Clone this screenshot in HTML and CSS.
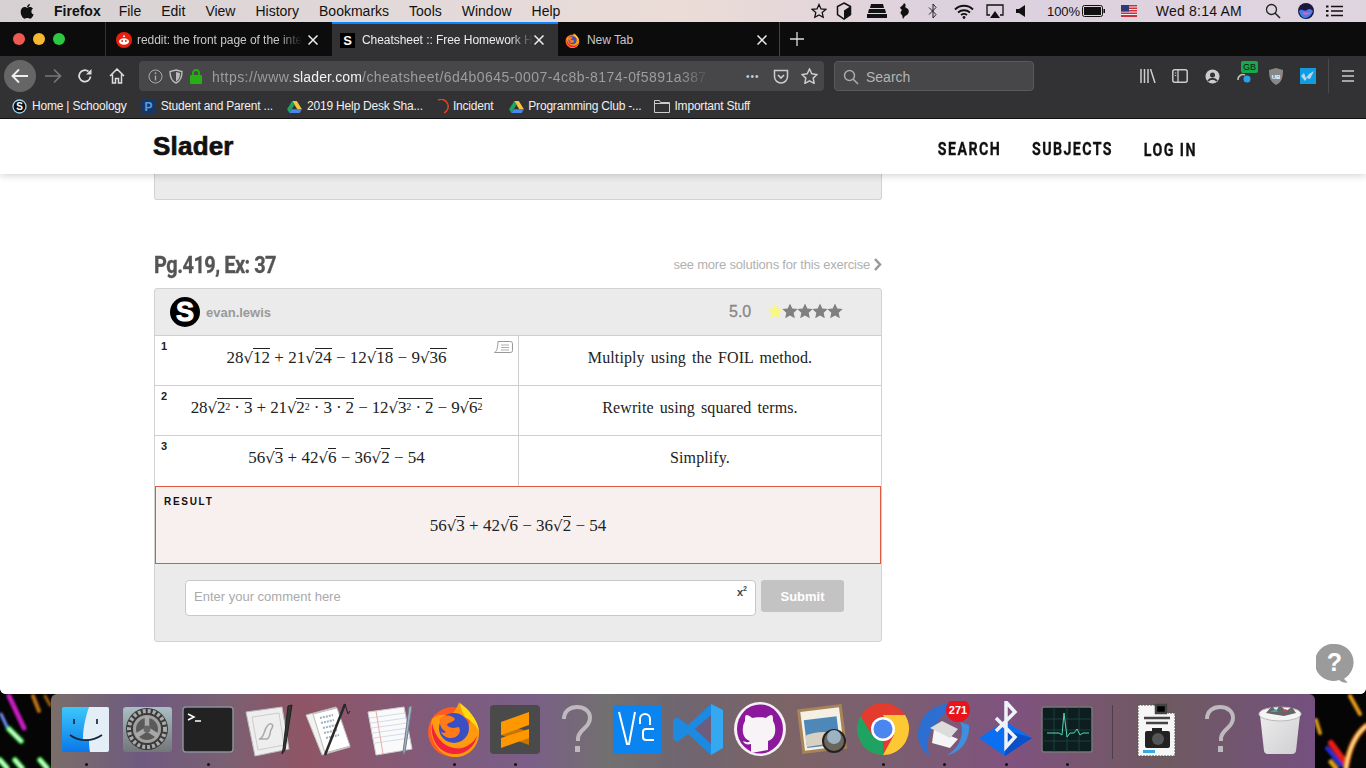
FILE: index.html
```html
<!DOCTYPE html>
<html lang="en">
<head>
<meta charset="utf-8">
<title>Cheatsheet :: Free Homework Help</title>
<link rel="stylesheet" href="styles.css">
</head>
<body>
<svg width="0" height="0" class="defs">
  <defs>
    <symbol id="ff" viewBox="0 0 56 56">
      <circle cx="27" cy="31" r="25" fill="#ff5a1f"/>
      <path d="M6 18C2 32 8 54 28 56c15 1 26-12 25-26-1-8-5-14-11-19 3 7 2 12 0 15C39 16 37 8 33 1c-3 8-5 11-11 14-6-2-10-2-16 3z" fill="#ff9a0e"/>
      <path d="M34 2c8 6 17 15 19 28-4-7-9-11-14-14-2-5-5-9-5-14z" fill="#ffdb12"/>
      <circle cx="28" cy="27" r="15" fill="#3b4fc4"/>
      <path d="M14 18c5-5 12-4 15 0-2 4-7 3-8 6 3 4 8 3 12 2 3 6-2 11-8 11-4 0-8-2-10-6 2 1 4 1 5 0-5-3-7-8-6-13z" fill="#ff7a18"/>
      <path d="M6 22c-2 14 5 30 22 31 12 1 21-8 23-18-5 9-14 14-23 12C17 45 9 36 6 22z" fill="#f2233d"/>
    </symbol>
    <symbol id="drive" viewBox="0 0 16 14">
      <path d="M5.500 1h5L16 10h-5z" fill="#f6c33b"/>
      <path d="M5.500 1 0 10l2.500 4L8 5z" fill="#1ea362"/>
      <path d="M2.500 14h11L16 10H5z" fill="#4a86f0"/>
    </symbol>
    <symbol id="qmark" viewBox="0 0 56 56">
      <path d="M16 18c0-8 6-12 13-12s13 4 13 11c0 10-11 11-12 20v3" fill="none" stroke="currentColor" stroke-width="4"/>
      <rect x="27" y="45" width="5" height="6" fill="currentColor"/>
    </symbol>
    <symbol id="starshape" viewBox="0 0 16 16">
      <path d="M8 .5l2.300 5 5.400.6-4 3.700 1.100 5.400L8 12.500l-4.800 2.700 1.100-5.400-4-3.700 5.400-.6z" fill="currentColor"/>
    </symbol>
    <filter id="soft" x="-30%" y="-30%" width="160%" height="160%"><feGaussianBlur stdDeviation="1"/></filter>
  </defs>
</svg>

<svg class="wallpaper" viewBox="0 0 1366 768" aria-hidden="true">
  <g fill="none" stroke-linecap="round" filter="url(#soft)">
    <path d="M9 696l15 32" stroke="#c81cc0" stroke-width="5"/>
    <path d="M33 696l6 15" stroke="#c07018" stroke-width="4"/>
    <path d="M45 696l5 9" stroke="#a06010" stroke-width="3"/>
    <path d="M1 714l7 15" stroke="#7090ff" stroke-width="3"/>
    <path d="M9 729l12 12" stroke="#30e040" stroke-width="6"/>
    <path d="M9 729l12 12" stroke="#f0fff0" stroke-width="2"/>
    <path d="M0 760l7 8M15 760l7 8M40 760l7 8" stroke="#30e040" stroke-width="6"/>
    <path d="M0 760l7 8M15 760l7 8M40 760l7 8" stroke="#f0fff0" stroke-width="2"/>
    <path d="M1350 696l10 18" stroke="#e89a18" stroke-width="4"/>
    <path d="M1316 720l4 13" stroke="#d89a18" stroke-width="4"/>
    <path d="M1331 743l14 19" stroke="#e81c18" stroke-width="6"/>
    <path d="M1327 748l14 17" stroke="#2030e0" stroke-width="4"/>
    <path d="M1331 762l5 6" stroke="#d8a018" stroke-width="5"/>
    <path d="M1346 768c3-20 10-34 20-42" stroke="#e87a10" stroke-width="6"/>
    <path d="M1346 768c3-20 10-34 20-42" stroke="#fff0a0" stroke-width="2"/>
  </g>
</svg>

<div class="desktop">
  <header class="menubar">
    <div class="menu-left">
      <svg class="apple" viewBox="0 0 14 16"><path d="M10 1c0 2-1.700 3.200-3 3.100C7 2.400 8.500 1.100 10 1zM7 4.800c.8 0 1.600-.7 3-.7 1.200 0 2.300.6 3 1.600-2.400 1.400-2 4.800.6 5.800-.7 1.800-2 4.200-3.500 4.200-1 0-1.400-.6-2.700-.6s-1.800.6-2.700.6C3 15.700.7 12.200.7 9c0-3 2-4.900 3.900-4.900 1.200 0 1.900.7 2.400.7z" fill="#111"/></svg>
      <b class="m-firefox">Firefox</b>
      <span class="m-item">File</span><span class="m-item">Edit</span><span class="m-item">View</span><span class="m-item">History</span><span class="m-item">Bookmarks</span><span class="m-item">Tools</span><span class="m-item">Window</span><span class="m-item">Help</span>
    </div>
    <div class="menu-right">
      <svg class="st" width="16" height="16" viewBox="0 0 16 16"><path d="M8 1.500l2 4.400 4.800.5-3.600 3.200 1 4.700L8 11.900l-4.200 2.400 1-4.700L1.200 6.400 6 5.900z" fill="none" stroke="#111" stroke-width="1.300"/></svg>
      <svg class="st" width="16" height="18" viewBox="0 0 16 18"><path d="M8 1l6.500 3.500v8L8 17l-6.500-4.500v-8z" fill="none" stroke="#111" stroke-width="1.500"/><path d="M8 8.500l6-4v8L8 17z" fill="#111"/></svg>
      <svg class="st" width="22" height="14" viewBox="0 0 22 14"><path d="M5 0h12l1 4H4zM3 5h16l1 4H2zM1 10h20v4H1z" fill="#111"/></svg>
      <svg class="st" width="12" height="16" viewBox="0 0 12 16"><path d="M6 0c2 1 2 3 1 4l3 2c2 3 0 6-3 7l-2 3-1-4c-2-1-2-3 0-5L2 5c1-2 3-2 4-5z" fill="#111"/></svg>
      <svg class="st" width="10" height="16" viewBox="0 0 10 16"><path d="M1 4.500l7 7L5 15V1l3 3.500-7 7" fill="none" stroke="#222" stroke-width="1"/></svg>
      <svg class="st" width="20" height="15" viewBox="0 0 20 15"><path d="M1 5.500c5-5 13-5 18 0M4 8.500c3.500-3 8.500-3 12 0M7 11c2-1.500 4-1.500 6 0" fill="none" stroke="#111" stroke-width="1.800"/><circle cx="10" cy="13.500" r="1.400" fill="#111"/></svg>
      <svg class="st" width="18" height="15" viewBox="0 0 18 15"><path d="M4 11H1V1h16v10h-3" fill="none" stroke="#111" stroke-width="1.300"/><path d="M9 7l5 7H4z" fill="#111"/></svg>
      <svg class="st" width="10" height="12" viewBox="0 0 10 12"><path d="M0 4h3l6-4v12L3 8H0z" fill="#111"/></svg>
      <span class="m-pct">100%</span>
      <svg class="st" width="24" height="12" viewBox="0 0 24 12"><rect x=".5" y=".5" width="20" height="11" rx="2" fill="none" stroke="#111"/><rect x="2" y="2" width="17" height="8" fill="#111"/><rect x="21.500" y="4" width="1.500" height="4" fill="#111"/></svg>
      <svg class="st flag" width="16" height="12" viewBox="0 0 16 12"><rect width="16" height="12" fill="#c9303a"/><path d="M0 2h16M0 4.500h16M0 7h16M0 9.500h16" stroke="#eee" stroke-width="1.200"/><rect width="8" height="6.500" fill="#2f3a78"/></svg>
      <span class="m-clock">Wed 8:14 AM</span>
      <svg class="st" width="16" height="16" viewBox="0 0 16 16"><circle cx="6.500" cy="6.500" r="5" fill="none" stroke="#222" stroke-width="1.300"/><path d="M10 10l5 5" stroke="#222" stroke-width="1.500"/></svg>
      <svg class="st siri" width="16" height="16" viewBox="0 0 16 16"><circle cx="8" cy="8" r="8" fill="#1d1740"/><path d="M1 8c3-3 5 1 8-1s4-1 6 1c-2 5-5 7-8 7S2 12 1 8z" fill="#3f7fe8"/><path d="M4 10c3-2 5 1 9-1-2 3-6 4-9 1z" fill="#ef5bb8"/></svg>
      <svg class="st" width="17" height="12" viewBox="0 0 17 12"><path d="M5 1.500h12M5 6h12M5 10.500h12" stroke="#111" stroke-width="1.600"/><path d="M0 1.500h2.500M0 6h2.500M0 10.500h2.500" stroke="#111" stroke-width="1.800"/></svg>
    </div>
  </header>

  <div class="window">
    <div class="tabstrip">
      <div class="lights"><i class="light red"></i><i class="light yellow"></i><i class="light green"></i></div>
      <div class="tab tab-first">
        <svg class="fav" width="16" height="16" viewBox="0 0 16 16"><circle cx="8" cy="8" r="8" fill="#e8200c"/><ellipse cx="8" cy="9.500" rx="5" ry="3.300" fill="#fff"/><circle cx="8" cy="4.200" r="1" fill="#fff"/><circle cx="6.200" cy="9" r=".9" fill="#e8200c"/><circle cx="9.800" cy="9" r=".9" fill="#e8200c"/></svg>
        <span class="tab-text fade">reddit: the front page of the inte</span>
        <svg class="tab-x" width="10" height="10" viewBox="0 0 10 10"><path d="M.5.500l9 9M9.500.500l-9 9" stroke="#eee" stroke-width="1.500"/></svg>
      </div>
      <div class="tab tab-active">
        <span class="fav-s">S</span>
        <span class="tab-text fade active-text">Cheatsheet :: Free Homework H</span>
        <svg class="tab-x" width="10" height="10" viewBox="0 0 10 10"><path d="M.5.500l9 9M9.500.500l-9 9" stroke="#eee" stroke-width="1.500"/></svg>
      </div>
      <div class="tab tab-last">
        <svg class="fav ff-fav" width="15" height="15"><use href="#ff"/></svg>
        <span class="tab-text">New Tab</span>
        <svg class="tab-x" width="10" height="10" viewBox="0 0 10 10"><path d="M.5.500l9 9M9.500.500l-9 9" stroke="#eee" stroke-width="1.500"/></svg>
      </div>
      <svg class="plus" width="14" height="14" viewBox="0 0 14 14"><path d="M7 0v14M0 7h14" stroke="#ddd" stroke-width="1.300"/></svg>
    </div>

    <div class="toolbar">
      <div class="backbtn"><svg width="18" height="16" viewBox="0 0 18 16"><path d="M17 8H2M8 1.500 1.500 8 8 14.500" fill="none" stroke="#eee" stroke-width="1.800"/></svg></div>
      <svg class="tb-fwd" width="18" height="16" viewBox="0 0 18 16"><path d="M1 8h15M10 1.500 16.500 8 10 14.500" fill="none" stroke="#777" stroke-width="1.700"/></svg>
      <svg class="tb-reload" width="16" height="16" viewBox="0 0 16 16"><path d="M13.500 8.500A5.700 5.700 0 1 1 11.500 3.500" fill="none" stroke="#ddd" stroke-width="1.800"/><path d="M14.500 1v5.500H9z" fill="#ddd"/></svg>
      <svg class="tb-home" width="16" height="16" viewBox="0 0 16 16"><path d="M1 8l7-7 7 7M3.500 6.500V15h3v-4.500h3V15h3V6.500" fill="none" stroke="#ddd" stroke-width="1.500"/></svg>
      <div class="urlbar">
        <svg class="u-info" width="15" height="15" viewBox="0 0 15 15"><circle cx="7.500" cy="7.500" r="6.500" fill="none" stroke="#aaa"/><path d="M7.500 6.500v5" stroke="#aaa" stroke-width="1.400"/><circle cx="7.500" cy="4.200" r=".9" fill="#aaa"/></svg>
        <svg class="u-shield" width="14" height="15" viewBox="0 0 14 15"><path d="M7 1l6 1.500c0 5-1 9.500-6 11.500-5-2-6-6.500-6-11.500z" fill="none" stroke="#bbb" stroke-width="1.400"/><path d="M7 3l4 1c0 4-1 7-4 8.500z" fill="#bbb"/></svg>
        <svg class="u-lock" width="12" height="15" viewBox="0 0 12 15"><rect y="6" width="12" height="9" rx="1" fill="#25b013"/><path d="M3 6.500V4a3 3 0 0 1 6 0v2.500" fill="none" stroke="#25b013" stroke-width="1.800"/></svg>
        <div class="u-text">https://www.<b>slader.com</b>/cheatsheet/6d4b0645-0007-4c8b-8174-0f5891a387</div>
        <span class="u-dots">•••</span>
        <svg class="u-pocket" width="16" height="15" viewBox="0 0 16 15"><path d="M1.500 1.500h13v6a6.500 6.500 0 0 1-13 0z" fill="none" stroke="#ccc" stroke-width="1.500"/><path d="M5 6l3 3 3-3" fill="none" stroke="#ccc" stroke-width="1.700"/></svg>
        <svg class="u-star" width="17" height="16" viewBox="0 0 17 16"><path d="M8.500 1l2.300 4.800 5.200.7-3.800 3.600.9 5.200-4.600-2.500-4.600 2.500.9-5.200L1 6.500l5.200-.7z" fill="none" stroke="#ccc" stroke-width="1.500"/></svg>
      </div>
      <div class="searchbar">
        <svg width="16" height="16" viewBox="0 0 16 16"><circle cx="6.500" cy="6.500" r="5" fill="none" stroke="#aaa" stroke-width="1.500"/><path d="M10 10l5 5" stroke="#aaa" stroke-width="1.600"/></svg>
        <span>Search</span>
      </div>
      <div class="tb-right">
        <span class="tb-slot"><svg width="16" height="14" viewBox="0 0 16 14"><path d="M1 0v14M4.500 0v14M8 0v14M10.500 0l4.500 14" stroke="#ccc" stroke-width="1.500" fill="none"/></svg></span>
        <span class="tb-slot"><svg width="16" height="14" viewBox="0 0 16 14"><rect x=".8" y=".8" width="14.400" height="12.400" rx="2" fill="none" stroke="#ccc" stroke-width="1.500"/><path d="M6 1v12" stroke="#ccc" stroke-width="1.300"/><path d="M2.800 4h1.500M2.800 6.500h1.500" stroke="#ccc"/></svg></span>
        <span class="tb-slot"><svg width="15" height="15" viewBox="0 0 15 15"><circle cx="7.500" cy="7.500" r="7" fill="#ccc"/><circle cx="7.500" cy="6" r="2.500" fill="#323234"/><path d="M3 12c2-3 7-3 9 0" fill="none" stroke="#323234" stroke-width="1.800"/></svg></span>
        <span class="tb-slot tb-ghost"><svg width="14" height="14" viewBox="0 0 14 14"><path d="M1 11a5 5 0 0 1 7-5" fill="none" stroke="#bbb" stroke-width="1.600"/><circle cx="10" cy="10" r="3.500" fill="#2aa1e8"/></svg><b class="gb">GB</b></span>
        <span class="tb-slot"><svg width="16" height="17" viewBox="0 0 16 17"><path d="M8 0l7 2c0 7-1 12-7 15-6-3-7-8-7-15z" fill="#888"/><text x="8" y="10.500" class="ub">UB</text></svg></span>
        <span class="tb-slot"><svg width="16" height="16" viewBox="0 0 16 16"><rect width="16" height="16" fill="#0e9de0"/><path d="M1 8l3-3 2 5 3-4 5-3-4 8-3-1-2 3z" fill="#bcd4e6"/></svg></span>
        <i class="tb-sep"></i>
        <svg class="tb-menu" width="12" height="12" viewBox="0 0 12 12"><path d="M0 1h12M0 6h12M0 11h12" stroke="#ccc" stroke-width="1.600"/></svg>
      </div>
    </div>

    <nav class="bookmarks">
      <span class="bm bm1"><svg width="15" height="15" viewBox="0 0 15 15"><circle cx="7.500" cy="7.500" r="6.500" fill="#111" stroke="#9fd4ee" stroke-width="1.300"/><text x="7.500" y="11" class="bm-s">S</text></svg>Home | Schoology</span>
      <span class="bm bm2"><svg width="13" height="15" viewBox="0 0 13 15"><rect width="13" height="15" fill="#12386b"/><text x="6.500" y="12" class="bm-p">P</text></svg>Student and Parent ...</span>
      <span class="bm bm3"><svg width="15" height="13"><use href="#drive"/></svg>2019 Help Desk Sha...</span>
      <span class="bm bm4"><svg width="14" height="15" viewBox="0 0 14 15"><path d="M3 1a7 7 0 0 1 6 13" fill="none" stroke="#e8401c" stroke-width="1.500"/><path d="M9 14a7 7 0 0 1-6-13" fill="none" stroke="#333" stroke-width="1.500"/></svg>Incident</span>
      <span class="bm bm5"><svg width="15" height="13"><use href="#drive"/></svg>Programming Club -...</span>
      <span class="bm bm6"><svg width="16" height="13" viewBox="0 0 16 13"><path d="M.5 12.500v-12h5l1 2h9v10zM.5 3.500h15" fill="none" stroke="#ccc"/></svg>Important Stuff</span>
    </nav>

    <main class="page">
      <div class="sitehead">
        <div class="logo">Slader</div>
        <div class="sitenav"><span>SEARCH</span><span>SUBJECTS</span><span class="nav-login">LOG IN</span></div>
      </div>
      <div class="content">
        <div class="prev-card"></div>
        <div class="ex-head">
          <h2>Pg.419, Ex: 37</h2>
          <a class="more">see more solutions for this exercise<svg width="9" height="13" viewBox="0 0 9 13"><path d="M2 1l5 5.500L2 12" fill="none" stroke="#999" stroke-width="2.600"/></svg></a>
        </div>
        <article class="card">
          <div class="card-head">
            <span class="avatar">S</span>
            <span class="author">evan.lewis</span>
            <span class="score">5.0</span>
            <span class="stars"><svg class="star star-on"><use href="#starshape"/></svg><svg class="star"><use href="#starshape"/></svg><svg class="star"><use href="#starshape"/></svg><svg class="star"><use href="#starshape"/></svg><svg class="star"><use href="#starshape"/></svg></span>
          </div>

          <div class="row">
            <div class="cell-l">
              <b class="num">1</b>
              <svg class="note" width="19" height="13" viewBox="0 0 19 13"><path d="M4 .5h12.500a2 2 0 0 1 2 2v7a2 2 0 0 1-2 2H.5c2-1 3-3 3.500-11z" fill="none" stroke="#999"/><path d="M7 4h8M7 6.500h8M7 9h8" stroke="#999" stroke-width=".8"/></svg>
              <span class="math">28<span class="r"><i>√</i><span>12</span></span> + 21<span class="r"><i>√</i><span>24</span></span> − 12<span class="r"><i>√</i><span>18</span></span> − 9<span class="r"><i>√</i><span>36</span></span></span>
            </div>
            <div class="cell-r">Multiply using the FOIL method.</div>
          </div>
          <div class="row">
            <div class="cell-l">
              <b class="num">2</b>
              <span class="math tight">28<span class="r"><i>√</i><span>2<sup>2</sup> · 3</span></span> + 21<span class="r"><i>√</i><span>2<sup>2</sup> · 3 · 2</span></span> − 12<span class="r"><i>√</i><span>3<sup>2</sup> · 2</span></span> − 9<span class="r"><i>√</i><span>6<sup>2</sup></span></span></span>
            </div>
            <div class="cell-r">Rewrite using squared terms.</div>
          </div>
          <div class="row row-last">
            <div class="cell-l">
              <b class="num">3</b>
              <span class="math">56<span class="r"><i>√</i><span>3</span></span> + 42<span class="r"><i>√</i><span>6</span></span> − 36<span class="r"><i>√</i><span>2</span></span> − 54</span>
            </div>
            <div class="cell-r">Simplify.</div>
          </div>

          <div class="result">
            <div class="result-label">RESULT</div>
            <div class="result-math"><span class="math">56<span class="r"><i>√</i><span>3</span></span> + 42<span class="r"><i>√</i><span>6</span></span> − 36<span class="r"><i>√</i><span>2</span></span> − 54</span></div>
          </div>

          <div class="comment">
            <div class="comment-input">
              <span class="ph">Enter your comment here</span>
              <b class="x2">x<sup>2</sup></b>
            </div>
            <div class="submit">Submit</div>
          </div>
        </article>
      </div>
      <svg class="help" width="38" height="40" viewBox="0 0 38 40"><path d="M19 0a18.500 18.500 0 0 1 9 34.700c1 1.500 2.500 2.800 4 3.800-3.500.5-7-.5-9-2.500A18.500 18.500 0 1 1 19 0z" fill="#9b9b9b"/><text x="18.500" y="27" class="help-q">?</text></svg>
    </main>
  </div>

  <footer class="dockrow">
    <div class="dock">
      <div class="slot on"><svg viewBox="0 0 56 56"><defs><linearGradient id="fa" x1="0" y1="0" x2="0" y2="1"><stop offset="0" stop-color="#3cc8fa"/><stop offset="1" stop-color="#0a78ea"/></linearGradient></defs><rect x="4" y="6" width="47" height="45" rx="2" fill="url(#fa)"/><path d="M31 6h18a2 2 0 0 1 2 2v41a2 2 0 0 1-2 2H32c-1-5-1-9-1-13h-6c0-12 3-23 6-32z" fill="#e3eef7"/><path d="M16 18v5M39 18v5" stroke="#1a2a3c" stroke-width="1.700"/><path d="M12 34c9 7 22 7 32 0" fill="none" stroke="#16283c" stroke-width="1.700"/></svg></div>
      <div class="slot"><svg viewBox="0 0 56 56"><defs><linearGradient id="pr" x1="0" y1="0" x2="0" y2="1"><stop offset="0" stop-color="#a8c0c4"/><stop offset="1" stop-color="#747678"/></linearGradient></defs><rect x="4" y="6" width="49" height="45" rx="3" fill="url(#pr)"/><circle cx="28" cy="28" r="21" fill="#3a3a3a"/><circle cx="28" cy="28" r="18" fill="none" stroke="#aaa" stroke-width="4" stroke-dasharray="3 2"/><circle cx="28" cy="28" r="14" fill="#5a5a5a"/><circle cx="28" cy="28" r="12.500" fill="none" stroke="#a0a0a0" stroke-width="3"/><path d="M28 28V15M28 28l11 7M28 28l-11 7" stroke="#a8a8a8" stroke-width="4.500"/><circle cx="28" cy="28" r="3.500" fill="#666"/></svg></div>
      <div class="slot on"><svg viewBox="0 0 56 56"><rect x="3" y="6" width="50" height="45" rx="3" fill="#222" stroke="#8a9099" stroke-width="1.500"/><path d="M8 13l6 3-6 3" fill="none" stroke="#fff" stroke-width="1.500"/><path d="M15 20h6" stroke="#fff" stroke-width="1.500"/></svg></div>
      <div class="slot"><svg viewBox="0 0 56 56"><path d="M4 11l36-5 7 42-34 7z" fill="#eee" stroke="#bbb"/><path d="M10 16l27-4 5 32-26 5z" fill="none" stroke="#ccc"/><path d="M17 38c6-1 4-9 9-14 3-3 6 0 4 3-3 4-1 9-5 11z" fill="none" stroke="#aaa" stroke-width="1.500"/><path d="M50 4l-7 45-3 4 1-5 5-43z" fill="#333" stroke="#222"/></svg></div>
      <div class="slot"><svg viewBox="0 0 56 56"><path d="M3 14l30-8 14 40-28 8z" fill="#f2f2f2" stroke="#bbb"/><path d="M10 13l24-6 13 38-25 7z" fill="#fff" stroke="#bbb"/><path d="M17 17l13-3M18 22l13-3M20 27l13-3M21 32l13-3M23 37l13-3" stroke="#9fb0c0" stroke-width="2" stroke-dasharray="2 1"/><path d="M42 3L22 54" stroke="#2a2a2a" stroke-width="2.500"/><path d="M42 3l3 10 2-3" fill="none" stroke="#222"/></svg></div>
      <div class="slot"><svg viewBox="0 0 56 56"><path d="M4 11l36-5 8 42-36 6z" fill="#fafafa" stroke="#ccc"/><path d="M6 17l35-5M7 22l35-5M8 27l35-5M9 32l35-5M10 37l35-5M11 42l35-5" stroke="#c8d4e4" stroke-width=".8"/><path d="M12 10l7 43" stroke="#ecaaaa"/><path d="M48 5l-7 46-1 3-1-3 6-45z" fill="#9db8cc" stroke="#778"/></svg></div>
      <div class="slot on"><svg><use href="#ff"/></svg></div>
      <div class="slot on"><svg viewBox="0 0 56 56"><rect x="3" y="4" width="50" height="49" rx="4" fill="#4a4a4a"/><path d="M14 21v13l28 10V31z" fill="#c87400"/><path d="M42 11v13L14 34V21z" fill="#ff9800"/><path d="M14 37l28-9v9L14 47z" fill="#ff9800"/></svg></div>
      <div class="slot qm"><svg><use href="#qmark"/></svg></div>
      <div class="slot"><svg viewBox="0 0 56 56"><rect x="3" y="4" width="49" height="49" rx="4" fill="#0a84f0"/><path d="M9 11l8 32h2l6-32M30 23v-5a4 4 0 0 1 10 0v6M44 28h-8a3 3 0 0 0-3 3v5a3 3 0 0 0 3 3h8" fill="none" stroke="#fff" stroke-width="2"/></svg></div>
      <div class="slot"><svg viewBox="0 0 56 56"><path d="M40 3l12 6v38l-12 7L17 33 6 41l-4-3V19l4-3 11 8z" fill="#1b8ae0"/><path d="M40 3l12 6v38l-12 7z" fill="#34a8f0"/><path d="M40 14L24 28l16 15z" fill="#6e5c7c"/></svg></div>
      <div class="slot"><svg viewBox="0 0 56 56"><ellipse cx="28" cy="28" rx="26" ry="27" fill="#f4f0f4"/><ellipse cx="28" cy="28" rx="23" ry="24.500" fill="#8c189c"/><path d="M19 52V43c-4 1-7 0-8-3 3 1 5 2 7 0-6-2-8-8-7-14 0-2 1-4 2-6 0-3 0-5 1-6 3 0 5 2 6 3 4-1 10-1 14 0 1-1 3-3 6-3 1 1 1 3 1 6 1 2 2 4 2 6 1 6-1 12-7 14v9z" fill="#f7f3f7"/></svg></div>
      <div class="slot"><svg viewBox="0 0 56 56"><rect x="7" y="7" width="42" height="42" transform="rotate(-7 28 28)" fill="#f4f0e4" stroke="#a8835a" stroke-width="3"/><rect x="11" y="17" width="33" height="28" transform="rotate(-7 28 28)" fill="#4e88b8"/><path d="M11 35c8-4 18-5 33-3l1 9-32 5z" fill="#d8d0c0"/><circle cx="40" cy="40" r="11" fill="#6d665c" stroke="#222" stroke-width="2"/><circle cx="40" cy="36" r="7" fill="#9bb3c2"/></svg></div>
      <div class="slot on"><svg viewBox="0 0 56 56"><circle cx="28" cy="28" r="26" fill="#e33b2e"/><path d="M28 54a26 26 0 0 1-22.500-39L17 34l11 0z" fill="#1ea362"/><path d="M28 54a26 26 0 0 0 22-40H28l11 20z" fill="#fcc934"/><circle cx="28" cy="28" r="12" fill="#fff"/><circle cx="28" cy="28" r="9.500" fill="#4a86f0"/></svg></div>
      <div class="slot on"><svg viewBox="0 0 56 56"><path d="M37 2C19 2 2 14 2 34c0 9 5 17 12 21-4-8-3-18 2-26 6-10 14-18 21-27z" fill="#2d6fd0"/><path d="M53 24c1 15-8 28-22 30 10-6 15-14 15-26 0-3-1-5-2-7z" fill="#3f8fe0"/><path d="M18 28l24 10-8 9-18-5z" fill="#f5f5f5"/><path d="M14 27l20 10 8-9-16-8z" fill="#dcdcdc"/><circle cx="42" cy="9" r="12" fill="#e8131b"/><text x="42" y="13" class="badge">271</text></svg></div>
      <div class="slot on"><svg viewBox="0 0 56 56"><path d="M1 37L27 20l27 17-27 18z" fill="#0a6ff0"/><path d="M27 55l27-18-27-8z" fill="#0a50c8"/><path d="M18 17l19 19-9 10V1l9 10-19 19" fill="none" stroke="#eef2fa" stroke-width="3.500"/></svg></div>
      <div class="slot on"><svg viewBox="0 0 56 56"><rect x="3" y="6" width="50" height="45" rx="2" fill="#0c1e20" stroke="#777" stroke-width="1.500"/><path d="M3 18h50M3 29h50M3 40h50M15 6v45M28 6v45M40 6v45" stroke="#254a48" stroke-width=".7"/><path d="M8 32h12l3 2 2-22 3 24 3-4h4l3-4 3 6 3-2h6" fill="none" stroke="#52d8b8" stroke-width="1"/></svg></div>
      <i class="dock-sep"></i>
      <div class="slot"><svg viewBox="0 0 56 56"><path d="M8 4h24l6 8h7v43H8z" fill="#f6f6f6" stroke="#555" stroke-dasharray="2 1"/><path d="M26 4h10v8h-10zM14 17h26M16 22h22" stroke="#444" stroke-width="2.500"/><rect x="15" y="30" width="25" height="17" rx="2" fill="#222"/><rect x="22" y="27" width="10" height="4" fill="#222"/><circle cx="28" cy="38" r="6" fill="#555"/><rect x="13" y="49" width="12" height="3" fill="#3aa8e0"/></svg></div>
      <div class="slot qm"><svg><use href="#qmark"/></svg></div>
      <div class="slot"><svg viewBox="0 0 56 56"><defs><linearGradient id="tr" x1="0" y1="0" x2="1" y2="1"><stop offset="0" stop-color="#ececec"/><stop offset="1" stop-color="#cfcfd2"/></linearGradient></defs><path d="M8 14h40l-4 36a4 4 0 0 1-4 3H16a4 4 0 0 1-4-3z" fill="url(#tr)"/><ellipse cx="28" cy="13" rx="21" ry="7" fill="#f4f4f4" stroke="#bbb"/><path d="M14 12l6-7 4 5 4-6 6 6 6-4 4 6-12 3z" fill="#666"/><path d="M18 11l6-3 2 3z" fill="#3aa8b0"/><path d="M28 11l6-3 2 3z" fill="#c04060"/></svg></div>
    </div>
  </footer>
</div>
</body>
</html>
```
FILE: styles.css
```css
* { box-sizing: border-box; }
html, body { margin: 0; height: 768px; overflow: hidden; }
body { background: #050505; font-family: "Liberation Sans", Arial, sans-serif; color: #111; }
.defs { display: block; height: 0; }
.wallpaper { position: absolute; left: 0; top: 0; width: 1366px; height: 768px; }
.desktop { position: relative; height: 768px; display: flex; flex-direction: column; }

/* menu bar */
.menubar { height: 22px; flex: none; display: flex; justify-content: space-between; align-items: center; font-size: 14px; background: linear-gradient(90deg, #d6d0d2 0%, #e4dada 35%, #ebdcd6 50%, #dcd0de 70%, #dfd5df 100%); }
.menu-left { display: flex; align-items: center; padding-left: 20px; }
.apple { width: 14px; height: 16px; margin-right: 20px; }
.m-firefox { margin-right: 18px; }
.m-item { margin-right: 20px; }
.menu-right { display: flex; align-items: center; width: 560px; }
.st { flex: none; }
.menu-right .st:nth-of-type(1) { margin-left: 5px; margin-right: 9px; }
.menu-right .st:nth-of-type(2) { margin-right: 14px; }
.menu-right .st:nth-of-type(3) { margin-right: 10px; }
.menu-right .st:nth-of-type(4) { margin-right: 18px; }
.menu-right .st:nth-of-type(5) { margin-right: 16px; }
.menu-right .st:nth-of-type(6) { margin-right: 12px; }
.menu-right .st:nth-of-type(7) { margin-right: 12px; }
.menu-right .st:nth-of-type(8) { margin-right: 21px; }
.m-pct { font-size: 13px; letter-spacing: -.1px; margin-right: 2px; }
.menu-right .st:nth-of-type(9) { margin-right: 15px; }
.menu-right .flag { margin-right: 19px; }
.m-clock { margin-right: 23px; letter-spacing: .2px; }
.menu-right .st:nth-of-type(11) { margin-right: 17px; }
.menu-right .siri { margin-right: 12px; }

/* window */
.window { height: 672px; flex: none; display: flex; flex-direction: column; overflow: hidden; border-radius: 0 0 6px 6px; background: #fff; position: relative; }
.tabstrip { height: 34px; flex: none; display: flex; background: #0c0c0c; color: #ddd; font-size: 12px; }
.lights { width: 105px; flex: none; display: flex; align-items: center; gap: 8px; padding-left: 13px; }
.light { width: 12px; height: 12px; border-radius: 50%; }
.red { background: #ee5a52; } .yellow { background: #f5b82e; } .green { background: #2bc840; }
.tab { display: flex; align-items: center; position: relative; flex: none; padding-top: 2px; }
.tab-first { width: 227px; padding-left: 10px; border-left: 1px solid #333; }
.tab-active { width: 226px; padding-left: 8px; padding-top: 0; background: #323234; border-top: 2px solid #0a84ff; color: #eee; }
.tab-last { width: 222px; padding-left: 7px; border-right: 1px solid #444; }
.fav { flex: none; margin-right: 5px; }
.ff-fav { margin-right: 7px; }
.fav-s { width: 15px; height: 15px; background: #000; color: #fff; font: bold 13px/15px "Liberation Sans", sans-serif; text-align: center; margin-right: 7px; flex: none; }
.tab-text { white-space: nowrap; color: #c8c8c8; letter-spacing: -.05px; }
.active-text { color: #eee; }
.fade { -webkit-mask-image: linear-gradient(90deg, #000 86%, transparent 100%); mask-image: linear-gradient(90deg, #000 86%, transparent 100%); }
.tab-x { position: absolute; right: 14px; top: 13px; }
.tab-active .tab-x { top: 11px; }
.tab-last .tab-x { right: 12px; }
.plus { margin: 10px 0 0 10px; }

.toolbar { height: 40px; flex: none; display: flex; align-items: center; background: #323234; padding-left: 4px; color: #ccc; }
.backbtn { width: 32px; height: 32px; border-radius: 50%; background: #666; display: flex; align-items: center; justify-content: center; flex: none; }
.tb-fwd { margin-left: 8px; flex: none; }
.tb-reload { margin-left: 15px; flex: none; }
.tb-home { margin-left: 16px; flex: none; }
.urlbar { margin-left: 14px; width: 685px; height: 30px; flex: none; background: #474749; border-radius: 4px; display: flex; align-items: center; padding-left: 9px; font-size: 14px; }
.u-shield { margin-left: 6px; flex: none; }
.u-lock { margin-left: 7px; flex: none; }
.u-info { flex: none; }
.u-text { margin-left: 10px; width: 514px; flex: none; white-space: nowrap; padding-top: 1px; color: #9d9d9f; letter-spacing: .45px; -webkit-mask-image: linear-gradient(90deg, #000 91%, transparent 97%); mask-image: linear-gradient(90deg, #000 91%, transparent 97%); }
.u-text b { color: #f2f2f2; font-weight: 400; letter-spacing: .15px; }
.u-dots { margin-left: 20px; font-size: 10px; letter-spacing: 1px; color: #ccc; width: 22px; flex: none; }
.u-pocket { margin-left: 5px; flex: none; }
.u-star { margin-left: 12px; flex: none; }
.searchbar { margin-left: 10px; width: 200px; height: 30px; flex: none; background: #474749; border: 1px solid #5a5a5c; border-radius: 4px; display: flex; align-items: center; gap: 7px; padding: 1px 0 0 8px; font-size: 14px; color: #b4b4b4; }
.tb-right { margin-left: 98px; display: flex; align-items: center; flex: none; }
.tb-slot { width: 32px; display: flex; justify-content: center; align-items: center; position: relative; }
.gb { position: absolute; left: 13px; top: -8px; width: 17px; height: 12px; background: #1aa84e; color: #111; font: 400 9px/12px "Liberation Sans", sans-serif; text-align: center; border-radius: 2px; }
.ub { font: bold 6px "Liberation Sans", sans-serif; fill: #fff; text-anchor: middle; }
.tb-sep { width: 1px; height: 34px; background: #4a4a4c; margin-left: 4px; }
.tb-menu { margin-left: 13px; }

.bookmarks { height: 23px; flex: none; background: #323234; color: #f0f0f0; font-size: 12px; letter-spacing: -.2px; display: flex; align-items: center; border-bottom: 1px solid #111; padding: 0 0 2px 12px; }
.bm { display: flex; align-items: center; gap: 5px; white-space: nowrap; flex: none; }
.bm2 { margin-left: 15px; gap: 6px; }
.bm3 { margin-left: 14px; gap: 5px; }
.bm4 { margin-left: 12px; gap: 4px; }
.bm5 { margin-left: 16px; gap: 4px; }
.bm6 { margin-left: 13px; gap: 4px; }
.bm-s { font: bold 10px "Liberation Sans", sans-serif; fill: #fff; text-anchor: middle; }
.bm-p { font: bold 12px "Liberation Sans", sans-serif; fill: #5a9ae0; text-anchor: middle; }

/* page */
.page { flex: 1; position: relative; background: #fff; overflow: hidden; }
.sitehead { height: 55px; display: flex; align-items: center; justify-content: space-between; padding: 0 169px 0 153px; box-shadow: 0 1px 8px rgba(0,0,0,.2); position: relative; background: #fff; }
.logo { font-size: 26px; font-weight: 700; letter-spacing: .2px; color: #111; -webkit-text-stroke: .7px #111; }
.sitenav { display: flex; gap: 39px; font: 700 18px Roboto, sans-serif; letter-spacing: 1.800px; color: #111; -webkit-text-stroke: .3px #111; transform: scaleX(.79); transform-origin: right center; padding-top: 5px; }
.nav-login { padding-top: 1px; }
.content { margin-left: 154px; width: 728px; }
.prev-card { height: 26px; background: #ebebeb; border: 1px solid #d2d2d2; border-top: 0; border-radius: 0 0 3px 3px; }
.ex-head { height: 88px; display: flex; justify-content: space-between; align-items: flex-end; padding-bottom: 10px; }
.ex-head h2 { margin: 0 0 -1px; font: 700 23px/26px Roboto, sans-serif; letter-spacing: -.6px; color: #555; transform: scaleX(.87); transform-origin: left center; -webkit-text-stroke: .3px #555; white-space: nowrap; }
.more { font-size: 13px; color: #b0b0b0; letter-spacing: -.2px; display: flex; align-items: center; gap: 3px; padding-bottom: 6px; }
.card { height: 354px; border: 1px solid #d2d2d2; border-radius: 3px; background: #ebebeb; display: flex; flex-direction: column; }
.card-head { height: 46px; flex: none; display: flex; align-items: center; padding-left: 15px; }
.avatar { width: 30px; height: 30px; border-radius: 50%; background: #000; color: #fff; font: 900 27px/30px "Liberation Sans", sans-serif; text-align: center; flex: none; -webkit-text-stroke: 1px #fff; }
.author { margin-left: 6px; font-size: 13px; font-weight: 700; color: #999; width: 523px; flex: none; }
.score { font-size: 16px; color: #888; -webkit-text-stroke: .3px #888; width: 38px; flex: none; }
.stars { display: flex; color: #808080; margin-top: -2px; }
.star { width: 16px; height: 16px; margin-right: -1px; flex: none; }
.star-on { color: #f8f880; }
.row { height: 50px; flex: none; display: flex; background: #fff; border-top: 1px solid #cfcfcf; font-family: "Liberation Serif", serif; font-size: 16px; color: #222; }
.row-last { height: 51px; }
.cell-l { width: 364px; flex: none; position: relative; text-align: center; padding-top: 12px; border-right: 1px solid #cfcfcf; font-size: 17px; }
.cell-r { flex: 1; text-align: center; padding-top: 13px; word-spacing: 2px; letter-spacing: .1px; }
.num { position: absolute; left: 6px; top: 4px; font: 700 11px "Liberation Sans", sans-serif; color: #222; }
.note { position: absolute; right: 5px; top: 5px; }
.math { white-space: nowrap; font-family: "Liberation Serif", serif; font-size: 17px; color: #222; }
.tight { letter-spacing: -.12px; }
.r { display: inline-block; white-space: nowrap; }
.r i { font-style: normal; font-family: "DejaVu Sans", sans-serif; font-size: 15px; }
.r span { display: inline-block; border-top: 1px solid #222; line-height: 17px; }
.r sup { font-size: 10px; line-height: 0; vertical-align: 3px; }
.result { height: 78px; flex: none; border: 1px solid #e2583e; background: #f8f0ef; }
.result-label { font-size: 10px; font-weight: 700; letter-spacing: 1.700px; color: #111; padding: 9px 0 0 8px; }
.result-math { text-align: center; padding-top: 9px; }
.comment { flex: 1; display: flex; align-items: flex-start; padding: 16px 0 0 30px; gap: 5px; }
.comment-input { width: 571px; height: 36px; background: #fff; border: 1px solid #c8c8c8; border-radius: 4px; position: relative; padding: 8px; font-size: 13px; }
.ph { color: #aaa; }
.x2 { position: absolute; right: 8px; top: 5px; font-size: 11px; color: #444; }
.x2 sup { font-size: 7px; line-height: 0; }
.submit { width: 83px; height: 32px; background: #c4c3c3; color: #fff; border-radius: 3px; font-size: 13px; font-weight: 700; text-align: center; line-height: 33px; }
.help { position: absolute; right: 12px; top: 525px; }
.help-q { font: 900 25px "Liberation Sans", sans-serif; fill: #fff; text-anchor: middle; }

/* dock */
.dockrow { height: 74px; flex: none; position: relative; }
.dock { margin-left: 51px; width: 1264px; height: 74px; padding: 7px 0 0 4px; display: flex; align-items: flex-start; border-radius: 6px 6px 0 0; background: linear-gradient(90deg, #7a6e68 0%, #6f5a80 7%, #7a6072 14%, #8f5566 20%, #7d5c80 33%, #7a5f88 38%, #727070 44%, #6f6570 50%, #7c6466 58%, #7a5f70 66%, #80527f 76%, #6f5a60 88%, #74507f 100%); }
.slot { width: 61.350px; height: 67px; flex: none; position: relative; display: flex; justify-content: center; }
.slot svg { width: 56px; height: 56px; display: block; }
.slot.on::after { content: ""; position: absolute; left: 50%; top: 62px; width: 3px; height: 3px; margin-left: -1px; border-radius: 50%; background: #111; }
.qm { color: #bdb9bd; }
.dock-sep { width: 1px; height: 54px; background: #4b3f48; flex: none; margin: 4px 14px 0 14px; }
.badge { font: 700 11px "Liberation Sans", sans-serif; fill: #fff; text-anchor: middle; }
```
